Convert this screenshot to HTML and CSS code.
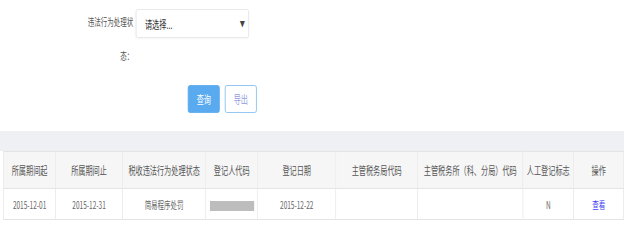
FILE: index.html
```html
<!DOCTYPE html>
<html lang="zh-CN">
<head>
  <meta charset="UTF-8">
  <meta name="viewport" content="width=device-width, initial-scale=1.0">
  <title>税收违法行为处理</title>
  <link rel="stylesheet" href="styles.css">
</head>
<body>
  <div class="frame">
    <div class="page">
      <!-- 查询条件 -->
      <div class="search">
        <div class="field">
          <label class="field-label">违法行为处理状态：</label>
          <div class="select">
            <span>请选择...</span>
            <span class="caret">&#9660;</span>
          </div>
        </div>
        <div class="actions">
          <button class="btn btn-primary">查询</button>
          <button class="btn btn-default">导出</button>
        </div>
      </div>

      <div class="band"></div>

      <!-- 结果列表 -->
      <table class="result">
        <colgroup>
          <col style="width:80px">
          <col style="width:103px">
          <col style="width:128px">
          <col style="width:80px">
          <col style="width:120px">
          <col style="width:126px">
          <col style="width:162px">
          <col style="width:78px">
          <col style="width:77px">
        </colgroup>
        <thead>
          <tr>
            <th>所属期间起</th>
            <th>所属期间止</th>
            <th>税收违法行为处理状态</th>
            <th>登记人代码</th>
            <th>登记日期</th>
            <th>主管税务局代码</th>
            <th>主管税务所（科、分局）代码</th>
            <th>人工登记标志</th>
            <th>操作</th>
          </tr>
        </thead>
        <tbody>
          <tr>
            <td>2015-12-01</td>
            <td>2015-12-31</td>
            <td>简易程序处罚</td>
            <td><span class="masked"></span></td>
            <td>2015-12-22</td>
            <td></td>
            <td></td>
            <td>N</td>
            <td><a class="link" href="#">查看</a></td>
          </tr>
        </tbody>
      </table>
    </div>
  </div>
</body>
</html>
```

FILE: styles.css
```css
body {
  margin: 0;
  overflow: hidden;
  background: #fff;
  font-family: "Noto Sans CJK SC", "Liberation Sans", sans-serif;
  color: #555;
}
.frame {
  width: 624px;
  overflow: hidden;
}
/* 页面按 960 宽排版，横向压缩到窗口宽度 */
.page {
  width: 960px;
  transform: scaleX(0.65);
  transform-origin: 0 0;
}
.search {
  padding-bottom: 18px;
}
.field {
  display: flex;
  align-items: flex-start;
}
.field-label {
  width: 72px;
  margin: 5px 4px 0 133px;
  font-size: 10px;
  line-height: 34px;
  text-align: right;
  color: #555;
}
.select {
  width: 174px;
  height: 29px;
  margin-top: 9px;
  box-sizing: border-box;
  border: 1px solid #e4e4e4;
  border-radius: 3px;
  box-shadow: 0 1px 2px rgba(0, 0, 0, 0.04);
  display: flex;
  align-items: center;
  justify-content: space-between;
  padding: 0 5px 0 13px;
  font-size: 11px;
  color: #333;
}
.caret {
  font-size: 8px;
  color: #444;
}
.actions {
  display: flex;
  gap: 8px;
  margin: 12px 0 0 289px;
}
.btn {
  width: 49px;
  height: 28px;
  box-sizing: border-box;
  border-radius: 3px;
  font-family: inherit;
  font-size: 11px;
  padding: 0;
  cursor: pointer;
}
.btn-primary {
  background: #59aaef;
  border: 1px solid #59aaef;
  color: #fff;
}
.btn-default {
  background: #fff;
  border: 1px solid #7dbbf0;
  color: #939ee0;
}
.band {
  height: 20px;
  background: #eff0f4;
}
.result {
  table-layout: fixed;
  width: 954px;
  margin-left: 5px;
  border-collapse: collapse;
}
.result th,
.result td {
  border: 1px solid #e4e4e4;
  text-align: center;
  white-space: nowrap;
  overflow: hidden;
  padding: 0;
}
.result th {
  height: 36px;
  background: #f6f6f6;
  font-size: 11px;
  font-weight: normal;
  color: #555;
}
.result td {
  height: 30px;
  font-size: 10px;
  color: #666;
}
.masked {
  display: inline-block;
  width: 68px;
  height: 10px;
  background: #bdbdbd;
  vertical-align: middle;
}
.link {
  color: #3d3df2;
  text-decoration: none;
}
```
